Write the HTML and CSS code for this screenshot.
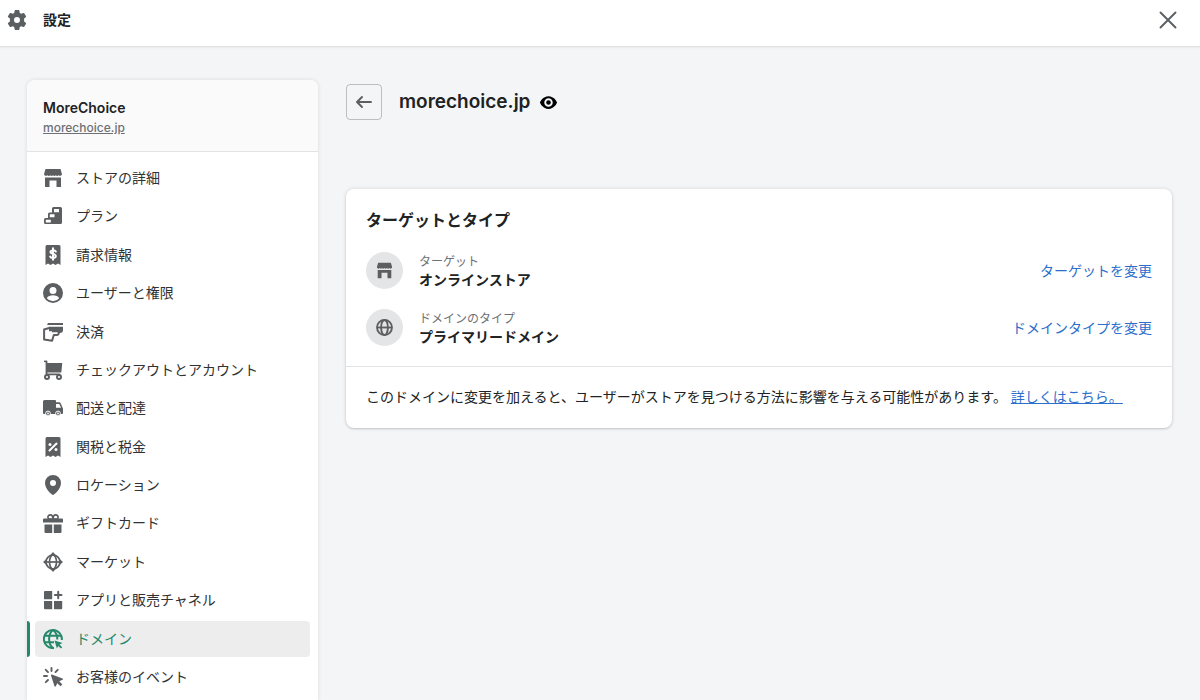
FILE: index.html
```
<!DOCTYPE html>
<html lang="ja">

<head>
  <meta charset="UTF-8">
  <meta name="viewport" content="width=device-width, initial-scale=1.0">
  <title>設定 - ドメイン</title>
  <link rel="stylesheet" href="styles.css">
</head>

<body>
  <svg class="sprite" aria-hidden="true">
    <symbol id="icon-store" viewBox="0 0 20 20">
      <path d="M2.500 1h15l1.500 5.200a2 2 0 0 1-3.400 1 2 2 0 0 1-2.800 0 2 2 0 0 1-2.800 0 2 2 0 0 1-2.800 0 2 2 0 0 1-2.800 0A2 2 0 0 1 1 6.200z" />
      <path d="M2 9.500h16V18.500a.5.5 0 0 1-.5.5H13.500v-6.500h-7V19H2.500a.5.5 0 0 1-.5-.5z" />
    </symbol>
    <symbol id="icon-globe" viewBox="0 0 20 20">
      <g fill="none" stroke="currentColor" stroke-width="2.200">
        <circle cx="10" cy="10" r="8.800" />
        <ellipse cx="10" cy="10" rx="4" ry="8.800" />
        <path d="M1.500 10h17" />
      </g>
    </symbol>
  </svg>

  <header class="topbar">
    <svg class="icon" viewBox="0 0 20 20">
      <path fill-rule="evenodd" d="M8.600 0h2.800a1 1 0 0 1 1 .8l.4 2.100 1.400.8 2-.7a1 1 0 0 1 1.200.4l1.500 2.500a1 1 0 0 1-.2 1.300l-1.600 1.400v2.800l1.600 1.400a1 1 0 0 1 .2 1.300l-1.500 2.500a1 1 0 0 1-1.200.4l-2-.7-1.400.8-.4 2.100a1 1 0 0 1-1 .8H8.600a1 1 0 0 1-1-.8l-.4-2.100-1.400-.8-2 .7a1 1 0 0 1-1.200-.4l-1.500-2.500a1 1 0 0 1 .2-1.300l1.600-1.400V8.600L1.300 7.200a1 1 0 0 1-.2-1.300l1.500-2.500A1 1 0 0 1 3.800 3l2 .7 1.400-.8.4-2.100a1 1 0 0 1 1-.8zM10 7a3 3 0 1 0 0 6 3 3 0 0 0 0-6z" />
    </svg>
    <h1 class="topbar-title">設定</h1>
    <button class="close-button" type="button" aria-label="閉じる">
      <svg class="icon" viewBox="0 0 20 20">
        <path d="M2.500 2.500l15 15M17.500 2.500l-15 15" fill="none" stroke="currentColor" stroke-width="1.900" stroke-linecap="round" />
      </svg>
    </button>
  </header>

  <div class="layout">
    <aside class="sidebar">
      <div class="shop">
        <p class="shop-name">MoreChoice</p>
        <a class="shop-url" href="#">morechoice.jp</a>
      </div>
      <nav class="menu">
        <a class="menu-item" href="#">
          <svg class="icon" viewBox="0 0 20 20"><use href="#icon-store" /></svg>
          ストアの詳細
        </a>
        <a class="menu-item" href="#">
          <svg class="icon" viewBox="0 0 20 20">
            <path fill-rule="evenodd" d="M10.500 1h7A1.500 1.500 0 0 1 19 2.500v14a1.500 1.500 0 0 1-1.500 1.500h-15A1.500 1.500 0 0 1 1 16.500V13.500a1.500 1.500 0 0 1 1.500-1.500H5V8a1.500 1.500 0 0 1 1.500-1.500H9v-4A1.500 1.500 0 0 1 10.500 1zM11 3v3.200h5V3zM6.800 8.300v3h4.700v-3zM2.800 13.700v2.800h5v-2.800z" />
          </svg>
          プラン
        </a>
        <a class="menu-item" href="#">
          <svg class="icon" viewBox="0 0 20 20">
            <path d="M4 0h12a1.500 1.500 0 0 1 1.500 1.500V20l-2.500-1.600L12.500 20 10 18.400 7.500 20 5 18.400 2.500 20V1.500A1.500 1.500 0 0 1 4 0z" />
            <path class="cutout" d="M12.800 6.500C12 5 7.500 4.800 7.500 7.100c0 2.500 5.300 1.300 5.300 4 0 2.500-4.900 2.300-5.600.5M10 3.200v11.600" />
          </svg>
          請求情報
        </a>
        <a class="menu-item" href="#">
          <svg class="icon" viewBox="0 0 20 20">
            <path fill-rule="evenodd" d="M10 0a10 10 0 1 0 0 20 10 10 0 0 0 0-20zM10 4a3.500 3.500 0 1 1 0 7 3.500 3.500 0 0 1 0-7zM3.800 15.200C5 13.200 7.300 12.300 10 12.300s5 .9 6.200 2.900a8 8 0 0 1-12.400 0z" />
          </svg>
          ユーザーと権限
        </a>
        <a class="menu-item" href="#">
          <svg class="icon" viewBox="0 0 20 20">
            <path d="M5 1h15v2H4zM6 4.800h14V8a3 3 0 0 1-3 3h-1.500l.5-1.800H6z" />
            <path d="M7 5.700 1.100 7.500v9.900l8 1.300 1.700-5.700h3.200a2 2 0 0 0 1.700-2.100l-.3-1.700H9" fill="none" stroke="currentColor" stroke-width="2" stroke-linejoin="round" />
          </svg>
          決済
        </a>
        <a class="menu-item" href="#">
          <svg class="icon" viewBox="0 0 20 20">
            <path d="M4 3h15.300l-1 9.500H4z" />
            <path d="M1.800 1.300h1.700v13h13" fill="none" stroke="currentColor" stroke-width="1.800" stroke-linecap="round" stroke-linejoin="round" />
            <circle class="ring" cx="4" cy="17" r="2" />
            <circle class="ring" cx="16" cy="17" r="2" />
          </svg>
          チェックアウトとアカウント
        </a>
        <a class="menu-item" href="#">
          <svg class="icon" viewBox="0 0 20 20">
            <path fill-rule="evenodd" d="M1.500 2H12a1 1 0 0 1 1 1v1.300h3a2 2 0 0 1 1.800 1.200L19.300 9l.7 1.500V15a1 1 0 0 1-1 1H1a1 1 0 0 1-1-1V3.500A1.500 1.500 0 0 1 1.500 2zM13 6v3.800h5L16.300 6z" />
            <circle class="wheel" cx="5" cy="15.500" r="2.400" />
            <circle class="wheel" cx="15" cy="15.500" r="2.400" />
            <circle class="dot" cx="5" cy="15.500" r=".9" />
            <circle class="dot" cx="15" cy="15.500" r=".9" />
          </svg>
          配送と配達
        </a>
        <a class="menu-item" href="#">
          <svg class="icon" viewBox="0 0 20 20">
            <path d="M4 0h12a1.500 1.500 0 0 1 1.500 1.500V20l-2.500-1.600L12.500 20 10 18.400 7.500 20 5 18.400 2.500 20V1.500A1.500 1.500 0 0 1 4 0z" />
            <path class="cutout" d="M6.500 13.500l7-7" />
            <circle class="dot" cx="7" cy="7.500" r="1.500" />
            <circle class="dot" cx="13" cy="12.500" r="1.500" />
          </svg>
          関税と税金
        </a>
        <a class="menu-item" href="#">
          <svg class="icon" viewBox="0 0 20 20">
            <path fill-rule="evenodd" d="M10 0a8 8 0 0 0-8 8c0 6.500 7 11.500 7.500 11.850a1 1 0 0 0 1 0C11 19.500 18 14.500 18 8a8 8 0 0 0-8-8zM10 5a3 3 0 1 1 0 6 3 3 0 0 1 0-6z" />
          </svg>
          ロケーション
        </a>
        <a class="menu-item" href="#">
          <svg class="icon" viewBox="0 0 20 20">
            <path d="M1 5.500h18a1 1 0 0 1 1 1V9.500H0V6.500a1 1 0 0 1 1-1zM1.500 11.500h7.700V20H2.500a1 1 0 0 1-1-1zM10.800 11.500h7.700V19a1 1 0 0 1-1 1h-6.700z" />
            <path d="M9.800 6.200H6A2.400 2.400 0 1 1 9.200 2.700L10 5l.8-2.300A2.400 2.400 0 1 1 14 6.200z" fill="none" stroke="currentColor" stroke-width="1.700" />
          </svg>
          ギフトカード
        </a>
        <a class="menu-item" href="#">
          <svg class="icon" viewBox="0 0 20 20">
            <g fill="none" stroke="currentColor" stroke-width="1.700">
              <circle cx="10" cy="10" r="7" />
              <ellipse cx="10" cy="10" rx="3.500" ry="7" />
              <path d="M1 10h18" />
            </g>
            <path d="M10 0l3.500 4h-7zM10 20l3.500-4h-7zM0 10l4-3.500v7zM20 10l-4-3.500v7z" />
          </svg>
          マーケット
        </a>
        <a class="menu-item" href="#">
          <svg class="icon" viewBox="0 0 20 20">
            <path d="M2 1h7.200v8.200H1V2a1 1 0 0 1 1-1zM1 11h8.200v8.200H2a1 1 0 0 1-1-1zM11 11h8.200v7.200a1 1 0 0 1-1 1H11z" />
            <path d="M15.200 1.700v6.600M11.900 5h6.600" fill="none" stroke="currentColor" stroke-width="2" stroke-linecap="round" />
          </svg>
          アプリと販売チャネル
        </a>
        <a class="menu-item active" href="#" aria-current="page">
          <svg class="icon" viewBox="0 0 20 20">
            <g fill="none" stroke="currentColor" stroke-width="2">
              <path d="M18.800 11A9 9 0 1 0 11 19" />
              <path d="M10 1C4.800 5 4.800 15 10 19M10 1c3 2.300 4.500 5.500 4.300 9.500M2 6.700h16M2 13.300h9" />
            </g>
            <path d="M11.500 11.500l8 2.600-3 1.500 2.700 2.700-1.300 1.300-2.700-2.700-1.300 2.700z" />
          </svg>
          ドメイン
        </a>
        <a class="menu-item" href="#">
          <svg class="icon" viewBox="0 0 20 20">
            <path d="M8 8.500a.7.7 0 0 1 .9-.9l10.600 3.900a.7.7 0 0 1 0 1.300l-3.200 1.500 3 3.200-1.800 1.800-3.200-3-1.500 3a.7.7 0 0 1-1.300 0z" />
            <path d="M8.500 1v3M2.800 2.800l2.200 2.300M1 9h3M2.800 15.200 5 13M14.700 2.800l-2.200 2.300" fill="none" stroke="currentColor" stroke-width="1.900" stroke-linecap="round" />
          </svg>
          お客様のイベント
        </a>
      </nav>
    </aside>

    <main class="content">
      <div class="page-header">
        <button class="back-button" type="button" aria-label="戻る">
          <svg class="icon" viewBox="0 0 20 20">
            <path d="M17 10H3M8 5l-5 5 5 5" fill="none" stroke="currentColor" stroke-width="1.900" stroke-linecap="round" stroke-linejoin="round" />
          </svg>
        </button>
        <h2 class="page-title">morechoice.jp</h2>
        <svg class="eye" viewBox="0 0 20 20">
          <path fill-rule="evenodd" d="M10 2.500C3.500 2.500 0 9 0 10s3.500 7.500 10 7.500S20 11 20 10s-3.500-7.500-10-7.500zM10 5a5 5 0 1 1 0 10 5 5 0 0 1 0-10z" />
          <circle cx="10" cy="10" r="2.700" />
        </svg>
      </div>

      <section class="card">
        <div class="card-section">
          <h3 class="card-title">ターゲットとタイプ</h3>
          <div class="setting">
            <span class="avatar"><svg class="avatar-icon" viewBox="0 0 20 20"><use href="#icon-store" /></svg></span>
            <div class="setting-text">
              <p class="setting-label">ターゲット</p>
              <p class="setting-value">オンラインストア</p>
            </div>
            <button class="link-button" type="button">ターゲットを変更</button>
          </div>
          <div class="setting">
            <span class="avatar"><svg class="avatar-icon" viewBox="0 0 20 20"><use href="#icon-globe" /></svg></span>
            <div class="setting-text">
              <p class="setting-label">ドメインのタイプ</p>
              <p class="setting-value">プライマリードメイン</p>
            </div>
            <button class="link-button" type="button">ドメインタイプを変更</button>
          </div>
        </div>
        <p class="card-footer">このドメインに変更を加えると、ユーザーがストアを見つける方法に影響を与える可能性があります。 <a href="#">詳しくはこちら。</a></p>
      </section>
    </main>
  </div>
</body>

</html>
```
FILE: styles.css
```
* {
  box-sizing: border-box;
}

body {
  display: flex;
  flex-direction: column;
  min-height: 100vh;
  margin: 0;
  background-color: #f4f5f7;
  color: #202223;
  font-family: Inter, "Noto Sans CJK JP", sans-serif;
  font-size: 14px;
  line-height: 20px;
}

h1,
h2,
h3,
p {
  margin: 0;
}

button {
  padding: 0;
  border: none;
  background: none;
  font: inherit;
  cursor: pointer;
}

.sprite {
  position: absolute;
  width: 0;
  height: 0;
}

.icon {
  flex: none;
  width: 20px;
  height: 20px;
  fill: currentColor;
  color: #5c5f62;
}

.topbar {
  display: flex;
  align-items: center;
  gap: 16px;
  padding: 9px 20px 15px 7px;
  background-color: #fff;
  border-bottom: 1px solid #e1e3e5;
  box-shadow: 0 1px 1px #ececee;
}

.topbar-title {
  font-size: 14px;
  font-weight: 600;
  line-height: 22px;
}

.close-button {
  display: flex;
  margin-left: auto;
}

.close-button .icon {
  width: 24px;
  height: 20px;
}

.layout {
  display: flex;
  flex: 1;
  gap: 28px;
  padding: 33px 28px 0 27px;
}

.sidebar {
  display: flex;
  flex-direction: column;
  flex: none;
  width: 291px;
  background-color: #fff;
  border-radius: 8px 8px 0 0;
  box-shadow: 0 0 4px rgba(23, 24, 24, 0.12);
}

.shop {
  padding: 18px 16px 13px;
  background-color: #fafafa;
  border-bottom: 1px solid #e1e3e5;
  border-radius: 8px 8px 0 0;
}

.shop-name {
  font-weight: 600;
}

.shop-url {
  display: block;
  color: #6d7175;
  font-size: 12px;
  font-weight: 500;
}

.menu {
  display: flex;
  flex: 1;
  flex-direction: column;
  justify-content: space-between;
  padding: 8px 8px 5px 0;
}

.menu-item {
  position: relative;
  display: flex;
  align-items: center;
  gap: 13px;
  height: 36px;
  margin-left: 8px;
  padding: 0 8px;
  border-radius: 4px;
  color: #303234;
  text-decoration: none;
}

.menu-item.active {
  background-color: #ededed;
}

.menu-item.active,
.menu-item.active .icon {
  color: #23896a;
}

/* green bar at the left edge of the sidebar */
.menu-item.active::before {
  content: "";
  position: absolute;
  top: 0;
  bottom: 0;
  left: -8px;
  width: 3px;
  background-color: #23896a;
  border-radius: 0 3px 3px 0;
}

.cutout {
  fill: none;
  stroke: #fff;
  stroke-width: 2;
  stroke-linecap: round;
}

.dot {
  fill: #fff;
}

.ring {
  fill: #fff;
  stroke: currentColor;
  stroke-width: 2;
}

.wheel {
  fill: currentColor;
  stroke: #fff;
  stroke-width: 1;
}

.content {
  flex: 1;
  min-width: 0;
  padding-top: 4px;
}

.page-header {
  display: flex;
  align-items: center;
  margin-bottom: 69px;
}

.back-button {
  display: flex;
  align-items: center;
  justify-content: center;
  width: 36px;
  height: 36px;
  margin-right: 17px;
  border: 1px solid #babfc3;
  border-radius: 4px;
}

.page-title {
  font-size: 19px;
  font-weight: 600;
  line-height: 28px;
}

.eye {
  width: 17px;
  height: 17px;
  margin-left: 10px;
}

.card {
  background-color: #fff;
  border-radius: 8px;
  box-shadow: 0 0 4px rgba(23, 24, 24, 0.12), 0 1px 2px rgba(0, 0, 0, 0.15);
}

.card-section {
  padding: 19px 20px 20px;
  border-bottom: 1px solid #e1e3e5;
}

.card-title {
  font-size: 16px;
  font-weight: 600;
  line-height: 24px;
}

.setting {
  display: flex;
  align-items: center;
  gap: 16px;
  margin-top: 20px;
}

.avatar {
  display: flex;
  align-items: center;
  justify-content: center;
  width: 37px;
  height: 37px;
  border-radius: 50%;
  background-color: #e4e5e7;
}

.avatar-icon {
  width: 17px;
  height: 17px;
  fill: currentColor;
  color: #5c5f62;
}

.setting-text {
  flex: 1;
}

.setting-label {
  color: #6d7175;
  font-size: 12px;
  line-height: 18px;
}

.setting-value {
  font-weight: 600;
  line-height: 18px;
}

.link-button,
.card-footer a {
  color: #2c6ecb;
}

.card-footer {
  padding: 20px 20px 21px;
}
```
